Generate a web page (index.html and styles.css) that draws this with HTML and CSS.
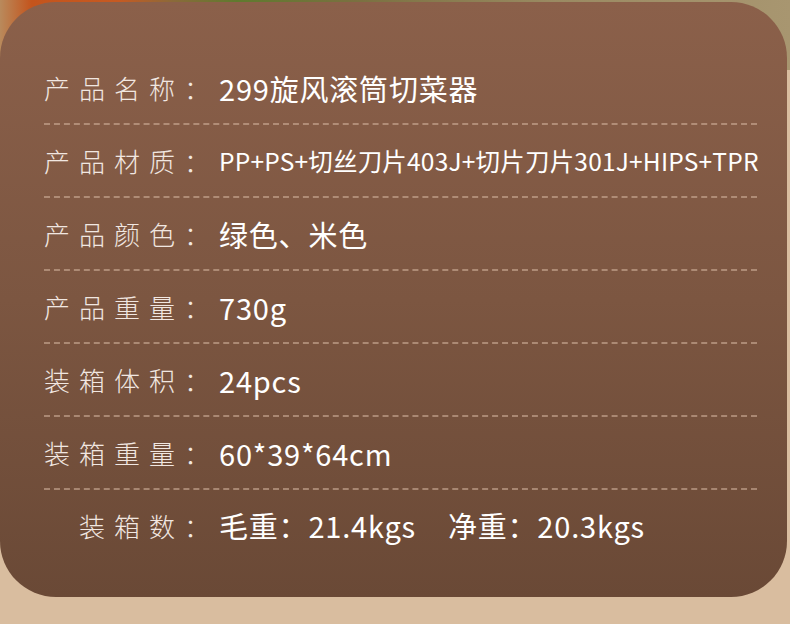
FILE: index.html
```html
<!DOCTYPE html>
<html lang="zh-CN">
<head>
    <meta charset="UTF-8">
    <meta name="viewport" content="width=device-width, initial-scale=1.0">
    <title>产品参数</title>
    <link rel="stylesheet" href="styles.css">
</head>
<body>
    <!-- 背景照片的残留部分 -->
    <div class="photo"></div>

    <div class="card">
        <div class="row">
            <span class="label">产品名称：</span>
            <span class="value">299旋风滚筒切菜器</span>
        </div>
        <div class="row">
            <span class="label">产品材质：</span>
            <span class="value small">PP+PS+切丝刀片403J+切片刀片301J+HIPS+TPR</span>
        </div>
        <div class="row">
            <span class="label">产品颜色：</span>
            <span class="value">绿色、米色</span>
        </div>
        <div class="row">
            <span class="label">产品重量：</span>
            <span class="value">730g</span>
        </div>
        <div class="row">
            <span class="label">装箱体积：</span>
            <span class="value">24pcs</span>
        </div>
        <div class="row">
            <span class="label">装箱重量：</span>
            <span class="value">60*39*64cm</span>
        </div>
        <div class="row last">
            <span class="label">装箱数：</span>
            <span class="value">毛重：21.4kgs<span class="gap"></span>净重：20.3kgs</span>
        </div>
    </div>
</body>
</html>
```
FILE: styles.css
```css
body {
    margin: 0;
    background-color: #d9bd9f;
    font-family: "Noto Sans CJK SC", "Noto Sans", sans-serif;
    position: relative;
    height: 624px;
    overflow: hidden;
}
.photo {
    position: absolute;
    left: 0;
    top: 0;
    width: 790px;
    height: 70px;
    background: linear-gradient(90deg, #b98a5c 0%, #c4541c 4%, #c65a22 15%, #8a6a3a 22%, #5f7a2e 30%, #7a7040 45%, #9a8a62 70%, #a89670 100%);
}
.card {
    position: relative;
    margin: 2px 3px 0 0;
    height: 545px;
    padding: 50px 30px 0 44px;
    border-radius: 56px;
    background: linear-gradient(180deg, #8b604a 0%, #7c5641 50%, #6a4936 100%);
}
.row {
    display: flex;
    align-items: center;
    height: 71px;
    border-bottom: 2px dashed rgba(214, 182, 160, 0.55);
}
.row.last {
    border-bottom: none;
    height: 70px;
}
.label {
    width: 175px;
    flex-shrink: 0;
    text-align: right;
    font-size: 26px;
    font-weight: 300;
    letter-spacing: 9px;
    color: #f1e7e1;
}
.value {
    font-size: 29px;
    font-weight: 400;
    letter-spacing: 0.8px;
    color: #ffffff;
    white-space: nowrap;
}
.value.small {
    font-size: 24.5px;
    letter-spacing: 0.2px;
}
.gap {
    display: inline-block;
    width: 32px;
}
```
